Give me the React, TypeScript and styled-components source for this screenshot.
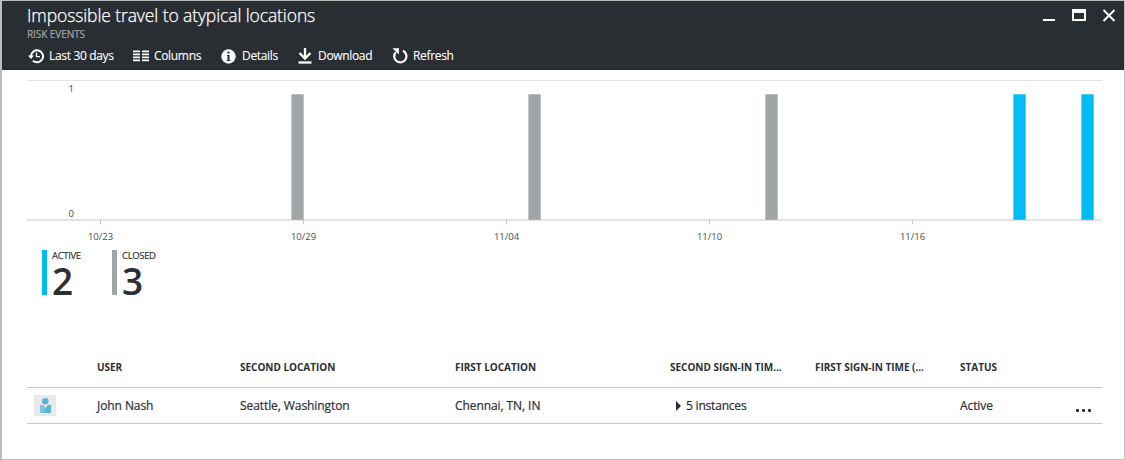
import React from "react";
import styled, { createGlobalStyle } from "styled-components";

const GlobalStyle = createGlobalStyle`
  * { box-sizing: border-box; }
  body {
    margin: 0;
    background: #fff;
    font-family: "Segoe UI", "Open Sans", "Noto Sans", sans-serif;
    color: #2a2f35;
  }
`;

const Blade = styled.main`
  width: 1125px;
  height: 460px;
  border: 1px solid #bcbdbd;
  border-left-width: 2px;
  background: #fff;
  overflow: hidden;
`;

const Header = styled.header`
  display: flex;
  justify-content: space-between;
  height: 69px;
  padding: 0 8px 0 25px;
  background: #292e32;
  color: #fff;
`;

const Title = styled.h1`
  margin: 3px 0 0;
  font-size: 17.5px;
  line-height: 23px;
  font-weight: 300;
  letter-spacing: -0.1px;
  -webkit-text-stroke: 0.25px currentColor;
  white-space: nowrap;
`;

const Subtitle = styled.div`
  padding-top: 1px;
  font-size: 10px;
  line-height: 12px;
  font-weight: 400;
  letter-spacing: -0.07px;
  -webkit-text-stroke: 0.2px currentColor;
  color: #a2a5a7;
`;

const Toolbar = styled.nav`
  display: flex;
  margin: 6px 0 0 1px;
`;

const Command = styled.button<{ $width: number; $gap: number }>`
  display: flex;
  align-items: center;
  gap: ${(p) => p.$gap}px;
  width: ${(p) => p.$width}px;
  height: 20px;
  padding: 0;
  border: 0;
  background: none;
  color: inherit;
  font: 400 12px/20px "Segoe UI", "Open Sans", sans-serif;
  letter-spacing: -0.33px;
  -webkit-text-stroke: 0.1px currentColor;
  white-space: nowrap;
  svg { flex: none; }
`;

const WindowControls = styled.div`
  display: flex;
  align-items: flex-start;
  gap: 16px;
  padding: 8px 0 0;
`;

const Content = styled.section`
  padding: 10px 22px 0 25px;
`;

const Chart = styled.svg`
  display: block;
  font-family: "Segoe UI", "Open Sans", sans-serif;
  font-size: 9.5px;
  fill: #494d50;
`;

const Totals = styled.div`
  display: flex;
  gap: 25px;
  margin: 6px 0 0 15px;
`;

const Total = styled.div<{ $color: string }>`
  width: 45px;
  height: 45px;
  padding-left: 5px;
  border-left: 5px solid ${(p) => p.$color};
`;

const TotalLabel = styled.div`
  font-size: 9.5px;
  line-height: 12px;
  letter-spacing: -0.35px;
  -webkit-text-stroke: 0.15px currentColor;
`;

const TotalValue = styled.div`
  font-size: 37px;
  line-height: 37px;
  font-weight: 600;
`;

const Row = styled.div<{ $head?: boolean }>`
  display: grid;
  grid-template-columns: 70px 143px 215px 215px 145px 145px 60px 1fr;
  align-items: center;
  height: ${(p) => (p.$head ? 41 : 36)}px;
  margin-top: ${(p) => (p.$head ? 52 : 0)}px;
  border-bottom: 1px solid #c8c9ca;
`;

const HeadCell = styled.div`
  font-size: 10px;
  line-height: 14px;
  font-weight: 700;
  letter-spacing: -0.02px;
  white-space: nowrap;
`;

const Cell = styled.div`
  display: flex;
  align-items: center;
  font-size: 12px;
  line-height: 16px;
  font-weight: 500;
  letter-spacing: -0.08px;
  -webkit-text-stroke: 0.2px currentColor;
  white-space: nowrap;
`;

const Instances = styled(Cell)`
  gap: 5px;
  padding-left: 6px;
  letter-spacing: -0.2px;
`;

const Avatar = styled.div`
  display: flex;
  width: 22px;
  height: 21px;
  margin-left: 7px;
  background: #e9e9e9;
`;

const More = styled.div`
  display: flex;
  gap: 3px;
  justify-content: flex-end;
  padding: 9px 11px 0 0;
`;

const Dot = styled.span`
  width: 3px;
  height: 3px;
  border-radius: 1px;
  background: #2a2f35;
`;

const HistoryIcon = () => (
  <svg width="16" height="16" viewBox="0 0 16 16" fill="none" stroke="#fff">
    <path d="M3 8.200A6 6 0 1 1 4.800 12.600" strokeWidth="2" />
    <path d="M0 7.500h6L3 11z" fill="#fff" stroke="none" />
    <path d="M8.500 4.500v4.200h3.500" strokeWidth="1.300" />
  </svg>
);

const ColumnsIcon = () => (
  <svg width="16" height="12" viewBox="0 0 16 12" fill="#fff">
    {[0, 3, 6, 9].map((y) => (
      <path key={y} d={`M0 ${y + 0.5}h7v1.800H0zM9 ${y + 0.5}h7v1.800H9z`} />
    ))}
  </svg>
);

const InfoIcon = () => (
  <svg width="15" height="15" viewBox="0 0 15 15">
    <circle cx="7.500" cy="7.500" r="7.200" fill="#fff" />
    <path d="M6.500 2.500h2v2h-2zM6 6h2.500v5h.8v1H5.700v-1h.8V7H6z" fill="#292e32" />
  </svg>
);

const DownloadIcon = () => (
  <svg width="14" height="16" viewBox="0 0 14 16" fill="none" stroke="#fff">
    <path d="M7 0v10M1.500 5L7 10.500l5.500-5.500" strokeWidth="2.300" />
    <path d="M.5 14.500h13" strokeWidth="2.300" />
  </svg>
);

const RefreshIcon = () => (
  <svg width="16" height="16" viewBox="0 0 16 16" fill="none" stroke="#fff">
    <path d="M11 2.800A6.100 6.100 0 1 1 3.800 4.200" strokeWidth="2.200" />
    <path d="M0.500 0.300H7V6.500L4.900 4.600 2.700 2.600z" fill="#fff" stroke="none" />
  </svg>
);

const commands = [
  { label: "Last 30 days", icon: <HistoryIcon />, width: 105, gap: 5 },
  { label: "Columns", icon: <ColumnsIcon />, width: 88, gap: 5 },
  { label: "Details", icon: <InfoIcon />, width: 77, gap: 6 },
  { label: "Download", icon: <DownloadIcon />, width: 94, gap: 6 },
  { label: "Refresh", icon: <RefreshIcon />, width: 70, gap: 5 },
];

const ticks = [
  { x: 73, label: "10/23" },
  { x: 276, label: "10/29" },
  { x: 479, label: "11/04" },
  { x: 682, label: "11/10" },
  { x: 885, label: "11/16" },
];

const closedColor = "#a0a5a8";
const activeColor = "#00bcf2";

const bars = [
  { x: 264.4, color: closedColor },
  { x: 501.4, color: closedColor },
  { x: 738.4, color: closedColor },
  { x: 986.4, color: activeColor },
  { x: 1054.4, color: activeColor },
];

const columns = [
  "",
  "USER",
  "SECOND LOCATION",
  "FIRST LOCATION",
  "SECOND SIGN-IN TIM...",
  "FIRST SIGN-IN TIME (...",
  "STATUS",
];

export default function App() {
  return (
    <>
      <GlobalStyle />
      <Blade>
        <Header>
          <div>
            <Title>Impossible travel to atypical locations</Title>
            <Subtitle>RISK EVENTS</Subtitle>
            <Toolbar>
              {commands.map((c) => (
                <Command key={c.label} $width={c.width} $gap={c.gap}>
                  {c.icon}
                  {c.label}
                </Command>
              ))}
            </Toolbar>
          </div>
          <WindowControls>
            <svg width="13" height="14"><path d="M0 10h12v2H0z" fill="#fff" /></svg>
            <svg width="14" height="14">
              <path d="M0 0h14v12H0zM2 4v6h10V4z" fill="#fff" fillRule="evenodd" />
            </svg>
            <svg width="14" height="14">
              <path d="M1.500 1l11 11M12.500 1l-11 11" stroke="#fff" strokeWidth="1.900" />
            </svg>
          </WindowControls>
        </Header>
        <Content>
          <Chart width="1075" height="164">
            <path d="M0 .5H1075" stroke="#e3e3e3" />
            <path d="M0 140H1075" stroke="#e3e3e3" strokeWidth="2" />
            <text x="41.500" y="12">1</text>
            <text x="41.500" y="137">0</text>
            {bars.map((b) => (
              <rect key={b.x} x={b.x} y="14.300" width="12.300" height="125.500" fill={b.color} />
            ))}
            {ticks.map((t) => (
              <g key={t.label}>
                <path d={`M${t.x + 0.5} 140v4`} stroke="#c4c6c7" />
                <text x={t.x + 0.5} y="160" textAnchor="middle">{t.label}</text>
              </g>
            ))}
          </Chart>
          <Totals>
            <Total $color={activeColor}>
              <TotalLabel>ACTIVE</TotalLabel>
              <TotalValue>2</TotalValue>
            </Total>
            <Total $color={closedColor}>
              <TotalLabel>CLOSED</TotalLabel>
              <TotalValue>3</TotalValue>
            </Total>
          </Totals>
          <Row $head>
            {columns.map((c) => (
              <HeadCell key={c}>{c}</HeadCell>
            ))}
          </Row>
          <Row>
            <Avatar>
              <svg width="22" height="21">
                <path d="M6 10h3l2.500 3L14 10h3v8H6z" fill="#59b4d9" />
                <path d="M6 10h3l2.500 3L9 18H6z" fill="#7ac3e1" />
                <circle cx="11.300" cy="6.300" r="3.300" fill="#59b4d9" />
              </svg>
            </Avatar>
            <Cell>John Nash</Cell>
            <Cell>Seattle, Washington</Cell>
            <Cell>Chennai, TN, IN</Cell>
            <Instances>
              <svg width="5" height="10"><path d="M0 0l5 5-5 5z" fill="#2a2f35" /></svg>
              5 instances
            </Instances>
            <Cell />
            <Cell>Active</Cell>
            <More>
              <Dot />
              <Dot />
              <Dot />
            </More>
          </Row>
        </Content>
      </Blade>
    </>
  );
}
